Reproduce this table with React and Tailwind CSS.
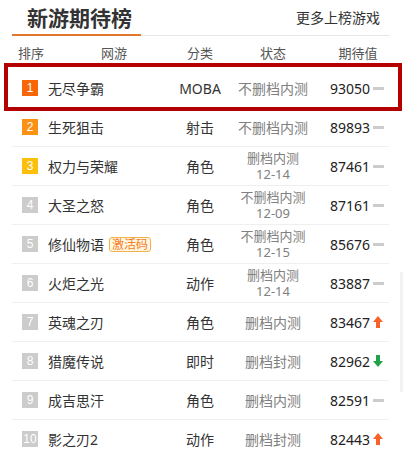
import React from 'react';

const games = [
  { rank: 1, name: '无尽争霸', type: 'MOBA', status: '不删档内测', value: 93050, trend: 'flat' },
  { rank: 2, name: '生死狙击', type: '射击', status: '不删档内测', value: 89893, trend: 'flat' },
  { rank: 3, name: '权力与荣耀', type: '角色', status: '删档内测', date: '12-14', value: 87461, trend: 'flat' },
  { rank: 4, name: '大圣之怒', type: '角色', status: '不删档内测', date: '12-09', value: 87161, trend: 'flat' },
  { rank: 5, name: '修仙物语', tag: '激活码', type: '角色', status: '不删档内测', date: '12-15', value: 85676, trend: 'flat' },
  { rank: 6, name: '火炬之光', type: '动作', status: '删档内测', date: '12-14', value: 83887, trend: 'flat' },
  { rank: 7, name: '英魂之刃', type: '角色', status: '删档内测', value: 83467, trend: 'up' },
  { rank: 8, name: '猎魔传说', type: '即时', status: '删档封测', value: 82962, trend: 'down' },
  { rank: 9, name: '成吉思汗', type: '角色', status: '删档内测', value: 82591, trend: 'flat' },
  { rank: 10, name: '影之刃2', type: '动作', status: '删档封测', value: 82443, trend: 'up' },
];

const badgeColor = (rank) => {
  if (rank === 1) return 'bg-[#f76707]';
  if (rank === 2) return 'bg-[#fb9214]';
  if (rank === 3) return 'bg-[#fcc00c]';
  return 'bg-[#cccccc]';
};

const Trend = ({ trend }) => {
  if (trend === 'up') {
    return (
      <svg width="10" height="12" viewBox="0 0 10 12" className="ml-[3px]">
        <path d="M5 0 L10 6 H7 V12 H3 V6 H0 Z" fill="#f8622a" />
      </svg>
    );
  }
  if (trend === 'down') {
    return (
      <svg width="10" height="12" viewBox="0 0 10 12" className="ml-[3px]">
        <path d="M5 12 L10 6 H7 V0 H3 V6 H0 Z" fill="#1ea446" />
      </svg>
    );
  }
  return <span className="ml-[3px] block w-[11px] h-[3px] bg-[#cccccc]" />;
};

const Row = ({ g }) => (
  <div className="relative h-[39px] border-b border-[#efefef] flex items-center">
    {g.rank === 1 && (
      <div className="absolute -top-[6px] -left-[8px] -right-[13px] h-[48px] border-4 border-[#b40000]" />
    )}
    <div className="w-[36px] pl-[10px]">
      <div className={`w-4 h-4 ${badgeColor(g.rank)} text-white text-[12px] leading-4 text-center font-['Liberation_Sans',sans-serif]`}>
        {g.rank}
      </div>
    </div>
    <div className="w-[122px] flex items-center text-[14px] text-[#333]">
      <span>{g.name}</span>
      {g.tag && (
        <span className="ml-[5px] px-[2px] h-[15px] leading-[13px] text-[12px] text-[#f57c1f] bg-[#fff6e2] border border-[#f5b14c] rounded-[3px]">
          {g.tag}
        </span>
      )}
    </div>
    <div className="w-[60px] text-center text-[14px] text-[#333]">{g.type}</div>
    <div className="ml-[3px] w-[80px] text-center text-[#808080]">
      {g.date ? (
        <div className="text-[13px] leading-[16px]">
          <div>{g.status}</div>
          <div>{g.date}</div>
        </div>
      ) : (
        <div className="text-[14px]">{g.status}</div>
      )}
    </div>
    <div className="ml-[17px] flex items-center text-[14px] text-[#222]">
      <span>{g.value}</span>
      <Trend trend={g.trend} />
    </div>
  </div>
);

export default function App() {
  return (
    <div className="relative w-[413px] h-[455px] overflow-hidden bg-white font-['Noto_Sans','Noto_Sans_CJK_SC',sans-serif]">
      {/* Title */}
      <div className="mx-[12px] w-[378px] h-[36px] border-b border-[#e6e6e6] flex items-end justify-between">
        <div className="w-[129px] h-full -mb-px border-b-2 border-[#e0782e] pl-[15px] flex items-center text-[21px] font-bold text-[#333] font-['Noto_Sans_CJK_SC',sans-serif]">
          新游期待榜
        </div>
        <div className="h-full pr-[10px] flex items-center text-[14px] text-[#333] font-['Noto_Sans_CJK_SC',sans-serif]">
          更多上榜游戏
        </div>
      </div>

      {/* Header */}
      <div className="mx-[12px] w-[377px] h-[33px] flex items-center text-[13px] text-[#555] font-['Noto_Sans_CJK_SC',sans-serif]">
        <div className="w-[36px] pl-[6px]">排序</div>
        <div className="w-[122px] pl-[53px]">网游</div>
        <div className="w-[60px] text-center">分类</div>
        <div className="ml-[3px] w-[80px] text-center">状态</div>
        <div className="ml-[17px] w-[56px] text-center">期待值</div>
      </div>

      {/* List */}
      <div className="mx-[12px] w-[377px]">
        {games.map((g) => (
          <Row key={g.rank} g={g} />
        ))}
      </div>

      <div className="absolute left-[400px] top-[272px] w-[3px] h-[120px] bg-[#f2f2f2]" />
    </div>
  );
}
